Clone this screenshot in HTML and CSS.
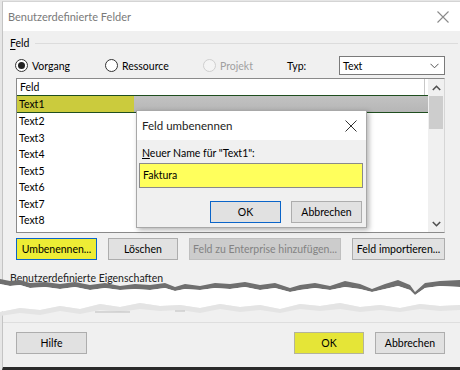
FILE: index.html
```html
<!DOCTYPE html>
<html lang="de">
<head>
  <meta charset="UTF-8" />
  <title>Benutzerdefinierte Felder</title>
  <link rel="stylesheet" href="styles.css">
</head>
<body>
  <div class="window">
    <div class="titlebar">
      <span class="title">Benutzerdefinierte Felder</span>
      <svg class="close" width="12" height="12" viewBox="0 0 12 12">
        <path d="M0.5 0.5L11.5 11.5M11.5 0.5L0.5 11.5" stroke="#8a8a8a" stroke-width="1.1" fill="none"/>
      </svg>
    </div>

    <div class="main">
      <!-- Feld group -->
      <div class="group">
        <span><u>F</u>eld</span>
        <div class="rule"></div>
      </div>

      <div class="options">
        <label class="radio r-vorgang"><span class="dot checked"></span>Vorgang</label>
        <label class="radio r-ressource"><span class="dot"></span>Ressource</label>
        <label class="radio r-projekt disabled"><span class="dot"></span>Projekt</label>
        <span class="typ">Typ:</span>
        <div class="select">
          <span>Text</span>
          <svg width="9" height="6" viewBox="0 0 9 6"><path d="M0.5 0.8L4.5 4.8L8.5 0.8" stroke="#555" stroke-width="1" fill="none"/></svg>
        </div>
      </div>

      <!-- field list -->
      <div class="list">
        <div class="rows">
          <div class="head"><span class="head-cell">Feld</span></div>
          <div class="row selected"><span class="mark">Text1</span></div>
          <div class="row">Text2</div>
          <div class="row">Text3</div>
          <div class="row">Text4</div>
          <div class="row">Text5</div>
          <div class="row">Text6</div>
          <div class="row">Text7</div>
          <div class="row">Text8</div>
          <div class="row">Text9</div>
        </div>
        <div class="scrollbar">
          <div class="arrow">
            <svg width="9" height="6" viewBox="0 0 9 6"><path d="M0.8 5L4.5 1.3L8.2 5" stroke="#505050" stroke-width="1.6" fill="none"/></svg>
          </div>
          <div class="thumb"></div>
          <div class="track"></div>
          <div class="arrow">
            <svg width="9" height="6" viewBox="0 0 9 6"><path d="M0.8 1L4.5 4.7L8.2 1" stroke="#505050" stroke-width="1.6" fill="none"/></svg>
          </div>
        </div>
      </div>

      <div class="actions">
        <button class="btn btn-mark focus w-rename">Umbenennen...</button>
        <button class="btn w-delete">Löschen</button>
        <button class="btn disabled w-enterprise">Feld zu Enterprise hinzufügen...</button>
        <button class="btn w-import">Feld importieren...</button>
      </div>

      <div class="props">
        <span class="props-label">Benutzerdefinierte Eigenschaften</span>
        <svg class="tear" width="460" height="48" viewBox="0 0 460 48">
          <path fill="#6f6f6f" d="M0 4L10 6L20 5L30 8L45 7L60 9L75 7L90 10L105 8L120 11L135 9L150 10L165 8L175 12L185 9L200 11L215 8L230 9L245 7L260 10L275 8L290 13L300 10L315 8L330 11L345 6L360 9L372 14L385 9L398 5L410 10L415 17L425 8L440 6L460 5L460 12L440 11L425 13L415 20L410 15L398 11L385 14L372 17L360 14L345 12L330 15L315 13L300 15L290 17L275 13L260 15L245 12L230 14L215 13L200 15L185 14L175 16L165 13L150 15L135 14L120 15L105 13L90 15L75 12L60 14L45 12L30 13L20 10L10 11L0 9Z"/>
          <path fill="#fff" d="M0 9L10 11L20 10L30 13L45 12L60 14L75 12L90 15L105 13L120 15L135 14L150 15L165 13L175 16L185 14L200 15L215 13L230 14L245 12L260 15L275 13L290 17L300 15L315 13L330 15L345 12L360 14L372 17L385 14L398 11L410 15L415 20L425 13L440 11L460 12L460 30L440 31L420 29L400 33L380 30L360 32L340 28L320 31L300 29L280 34L260 30L240 32L220 29L200 33L180 30L160 31L140 28L120 32L100 29L80 34L60 31L40 35L20 33L0 37Z"/>
          <path fill="#e4e4e4" d="M0 37L20 33L40 35L60 31L80 34L100 29L120 32L140 28L160 31L180 30L200 33L220 29L240 32L260 30L280 34L300 29L320 31L340 28L360 32L380 30L400 33L420 29L440 31L460 30L460 35L440 36L420 34L400 37L380 35L360 37L340 34L320 36L300 34L280 38L260 35L240 37L220 34L200 38L180 35L160 36L140 34L120 37L100 35L80 39L60 36L40 40L20 38L0 41Z"/>
          <path stroke="#bdbdbd" stroke-width="1" d="M95 37H130M175 36H185"/>
        </svg>
      </div>
    </div>

    <div class="footer">
      <button class="btn w-help">Hilfe</button>
      <div class="footer-right">
        <button class="btn btn-ok w-ok">OK</button>
        <button class="btn w-cancel">Abbrechen</button>
      </div>
    </div>

    <!-- rename dialog -->
    <div class="modal">
      <div class="modal-title">
        <span>Feld umbenennen</span>
        <svg width="12" height="12" viewBox="0 0 12 12">
          <path d="M0.5 0.5L11.5 11.5M11.5 0.5L0.5 11.5" stroke="#333" stroke-width="1" fill="none"/>
        </svg>
      </div>
      <div class="modal-body">
        <label class="modal-label"><u>N</u>euer Name für "Text1":</label>
        <div class="name-input">Faktura</div>
        <div class="modal-actions">
          <button class="btn focus w-ok">OK</button>
          <button class="btn w-cancel">Abbrechen</button>
        </div>
      </div>
    </div>
  </div>
</body>
</html>
```

FILE: styles.css
```css
* {
  box-sizing: border-box;
}
body {
  margin: 0;
  background-color: #e6e6e6;
  font-family: Lato, "Noto Sans", sans-serif;
  font-size: 10.5px;
  color: #000;
}
.window {
  position: relative;
  width: 458px;
  height: 369px;
  margin: 1px 0 0 2px;
  border-top: 1px solid #d4d4d4;
  border-left: 1px solid #c4c4c4;
  border-bottom: 3px solid #2b2b2b;
  background: #f0f0f0;
  display: flex;
  flex-direction: column;
}
.titlebar {
  height: 29px;
  background: white;
  display: flex;
  align-items: center;
  justify-content: space-between;
  padding: 0 11px 0 5px;
  flex-shrink: 0;
}
.title {
  font-size: 11px;
  color: #7a7a7a;
}
.main {
  padding: 0 15px 0 13px;
}
.group {
  display: flex;
  align-items: center;
  height: 16px;
  margin: 4px -13px 0 -6px;
}
.group u {
  text-underline-offset: 2px;
}
.rule {
  flex: 1;
  height: 1px;
  background: #dcdcdc;
  margin-left: 6px;
}
.options {
  display: flex;
  align-items: center;
  height: 19px;
  margin-top: 5px;
}
.radio {
  display: flex;
  align-items: center;
  gap: 4px;
}
.r-vorgang { width: 90px; margin-left: -1px; }
.r-ressource { width: 98px; }
.r-projekt { width: 84px; }
.dot {
  width: 13px;
  height: 13px;
  border: 1px solid #333;
  border-radius: 50%;
  background: white;
  display: flex;
  align-items: center;
  justify-content: center;
}
.dot.checked::after {
  content: "";
  width: 7px;
  height: 7px;
  border-radius: 50%;
  background: #222;
}
.disabled {
  color: #a0a0a0;
}
.radio.disabled .dot {
  border-color: #cfcfcf;
  background: #f4f4f4;
}
.typ {
  width: 52px;
}
.select {
  flex: 1;
  height: 19px;
  border: 1px solid #7a7a7a;
  background: white;
  display: flex;
  align-items: center;
  justify-content: space-between;
  padding: 0 5px 0 3px;
}
.list {
  display: flex;
  height: 155px;
  margin-top: 3px;
  border: 1px solid #8a8a8a;
  border-right-color: #d6d6d6;
  background: white;
  overflow: hidden;
}
.rows {
  flex: 1;
}
.head {
  height: 17px;
  border-bottom: 1px solid #1f4e1f;
}
.head-cell {
  display: block;
  width: 408px;
  height: 16px;
  line-height: 16px;
  padding-left: 3px;
  border-right: 1px solid #c8c8c8;
}
.row {
  height: 16.5px;
  line-height: 16px;
  padding-left: 2px;
}
.row.selected {
  height: 17px;
  padding-left: 0;
  background: linear-gradient(#c2c2c2, #b6b6b6);
  border-bottom: 1px solid #1f4e1f;
  line-height: 16px;
}
.mark {
  display: block;
  width: 117px;
  height: 16px;
  padding-left: 2px;
  background: #cbcb3d;
}
.scrollbar {
  width: 16px;
  background: #f0f0f0;
  display: flex;
  flex-direction: column;
}
.arrow {
  height: 17px;
  display: flex;
  align-items: center;
  justify-content: center;
}
.thumb {
  height: 33px;
  margin: 0 1px;
  background: #cdcdcd;
}
.track {
  flex: 1;
}
.btn {
  height: 22px;
  border: 1px solid #adadad;
  background: #e1e1e1;
  font-family: inherit;
  font-size: 10.5px;
  color: #000;
  padding: 0;
  white-space: nowrap;
}
.btn.focus {
  border-color: #0a64c8;
}
.btn-mark {
  background: #eded35;
}
.btn.disabled {
  background: #cccccc;
  border-color: #bfbfbf;
  color: #838383;
}
.actions {
  display: flex;
  justify-content: space-between;
  margin-top: 5px;
}
.w-rename { width: 81px; }
.w-delete { width: 70px; }
.w-enterprise { width: 152px; }
.w-import { width: 93px; }
.props {
  position: relative;
  height: 63px;
  margin: 0 -15px 0 -13px;
  padding: 12px 0 0 7px;
  border-bottom: 1px solid #dedede;
}
.props-label {
  color: #222;
}
.tear {
  position: absolute;
  left: -3px;
  top: 15px;
}
.footer {
  display: flex;
  justify-content: space-between;
  padding: 9px 15px 0 13px;
}
.footer-right {
  display: flex;
  gap: 11px;
}
.w-help { width: 71px; }
.w-ok { width: 70px; }
.w-cancel { width: 70px; }
.btn-ok {
  background: #e5e537;
  border-color: #b4b49a;
}
.modal {
  position: absolute;
  left: 133px;
  top: 108px;
  width: 231px;
  height: 118px;
  background: #f0f0f0;
  border: 1px solid #a8a8a8;
  box-shadow: 2px 2px 5px rgba(0, 0, 0, 0.3);
}
.modal-title {
  height: 29px;
  background: white;
  display: flex;
  align-items: center;
  justify-content: space-between;
  padding: 0 9px 0 5px;
  font-size: 11.5px;
  color: #222;
}
.modal-body {
  padding: 7px 3px 0 2px;
}
.modal-label {
  display: block;
  height: 15px;
  padding-left: 3px;
}
.name-input {
  height: 25px;
  margin-top: 1px;
  border: 1px solid #8a8a8a;
  background: #ffff5c;
  padding-left: 3px;
  line-height: 23px;
}
.modal-actions {
  display: flex;
  justify-content: flex-end;
  gap: 10px;
  margin-top: 13px;
  padding-right: 1px;
}
.modal-actions .btn {
  width: 71px;
  height: 22px;
}
```
